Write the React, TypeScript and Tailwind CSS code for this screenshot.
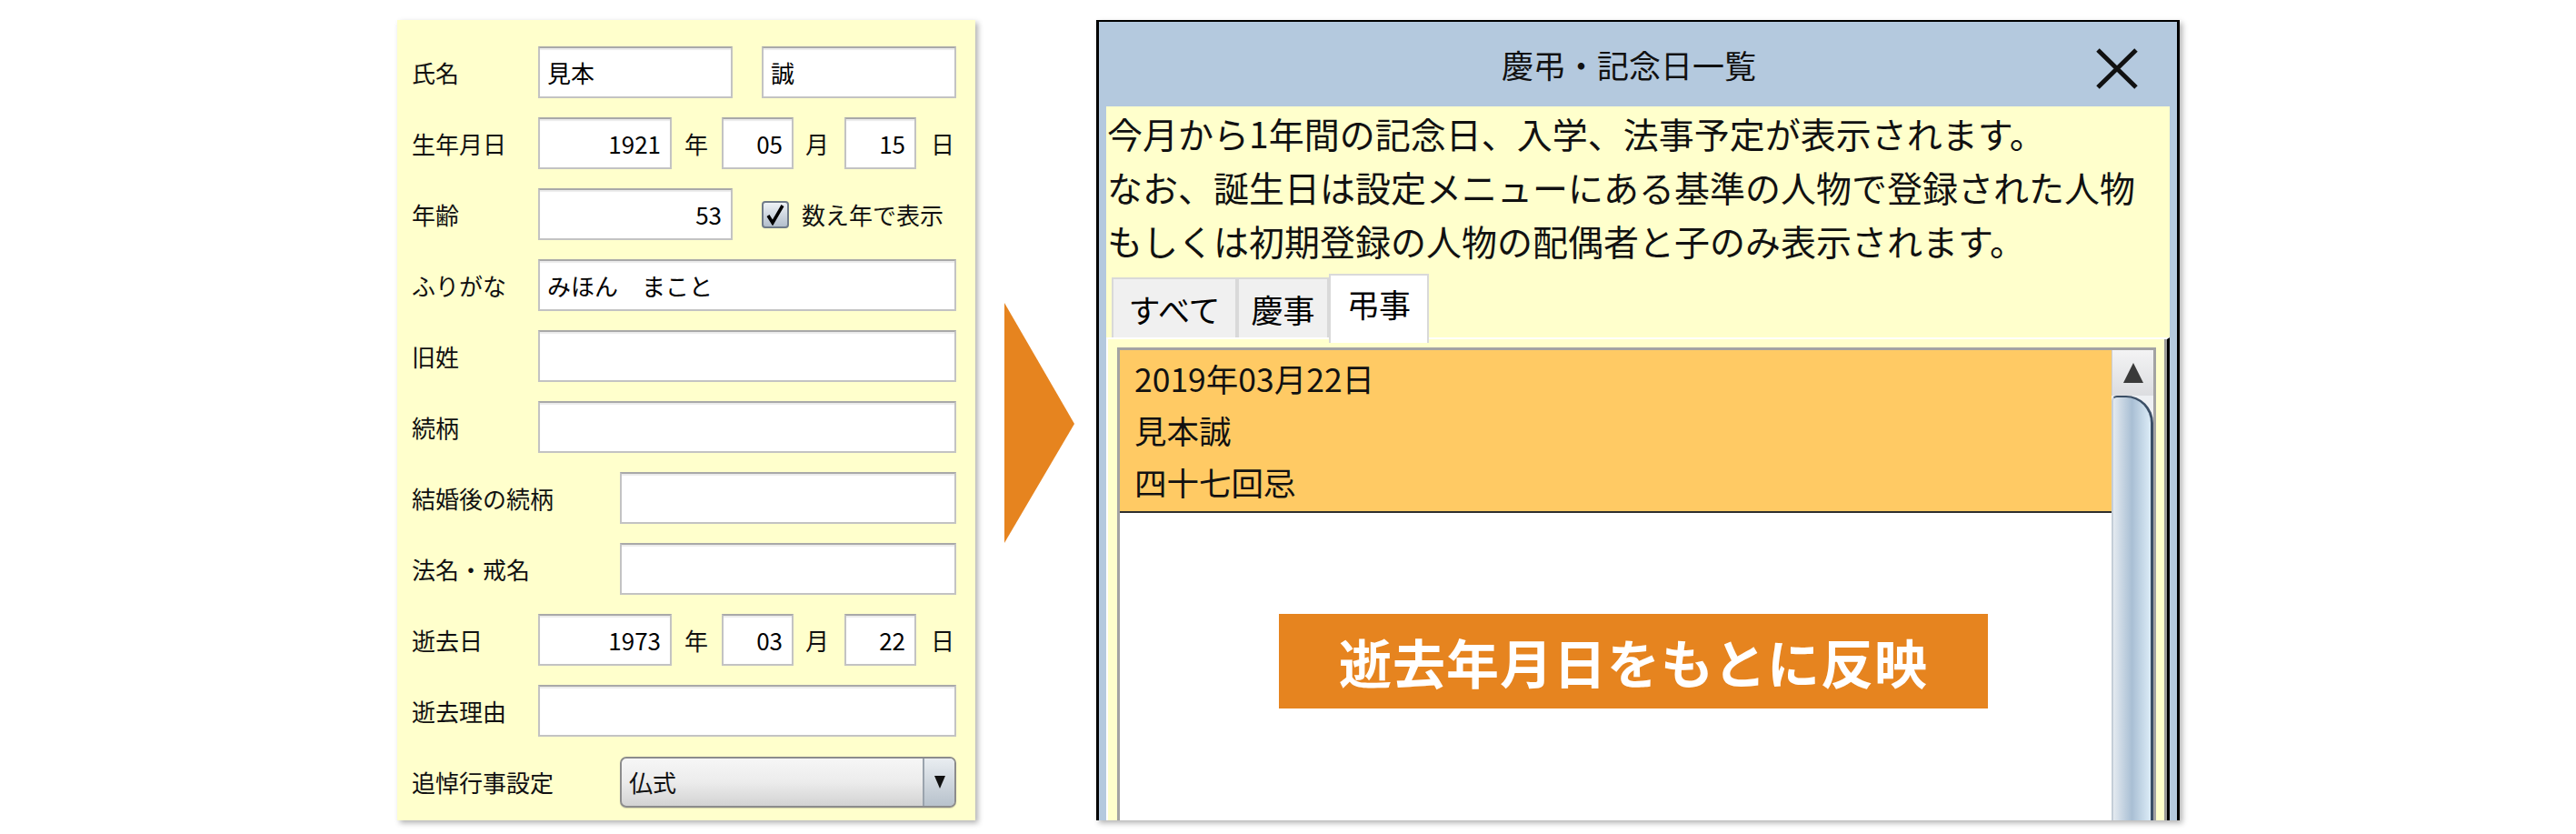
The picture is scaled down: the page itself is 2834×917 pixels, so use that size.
import React from "react";

const font = { fontFamily: '"Noto Sans CJK JP", "Noto Sans", sans-serif' };

function Box({ w, children, right }: { w: string; children?: React.ReactNode; right?: boolean }) {
  return (
    <div
      className={`${w} h-[57px] shrink-0 bg-white border-2 border-[#c3c3c3] border-t-[#a9a9a9] shadow-[inset_0_2px_1px_rgba(0,0,0,0.08)] flex items-center ${
        right ? "justify-end pr-[10px]" : "pl-[8px]"
      } text-[26px] leading-none text-black`}
    >
      {children}
    </div>
  );
}

function Label({ w, children }: { w: string; children: React.ReactNode }) {
  return <div className={`${w} shrink-0 text-[26px] leading-none text-[#111]`}>{children}</div>;
}

function Row({ children }: { children: React.ReactNode }) {
  return <div className="flex items-center h-[57px]">{children}</div>;
}

function Unit({ children, ml }: { children: React.ReactNode; ml: string }) {
  return <span className={`${ml} text-[26px] leading-none text-[#111] shrink-0`}>{children}</span>;
}

function LeftPanel() {
  return (
    <div className="w-[636px] h-[880px] shrink-0 bg-[#ffffcc] shadow-[3px_3px_6px_rgba(0,0,0,0.3)] pt-[29px] pl-[16px] flex flex-col gap-[21px]">
      <Row>
        <Label w="w-[139px]">氏名</Label>
        <Box w="w-[214px]">見本</Box>
        <div className="w-[32px] shrink-0" />
        <Box w="w-[214px]">誠</Box>
      </Row>
      <Row>
        <Label w="w-[139px]">生年月日</Label>
        <Box w="w-[147px]" right>1921</Box>
        <Unit ml="ml-[14px]">年</Unit>
        <div className="ml-[15px]">
          <Box w="w-[79px]" right>05</Box>
        </div>
        <Unit ml="ml-[13px]">月</Unit>
        <div className="ml-[17px]">
          <Box w="w-[79px]" right>15</Box>
        </div>
        <Unit ml="ml-[16px]">日</Unit>
      </Row>
      <Row>
        <Label w="w-[139px]">年齢</Label>
        <Box w="w-[214px]" right>53</Box>
        <div className="ml-[32px] w-[30px] h-[30px] rounded-[4px] border-2 border-[#6f7b89] bg-gradient-to-b from-[#eef2f6] to-[#b3bfcc] flex items-center justify-center shrink-0">
          <svg width="22" height="24" viewBox="0 0 22 24">
            <path d="M3 13 L8 21 L19 2" fill="none" stroke="#000" strokeWidth="3.5" strokeLinejoin="miter" />
          </svg>
        </div>
        <span className="ml-[14px] text-[26px] leading-none text-[#111] whitespace-nowrap">数え年で表示</span>
      </Row>
      <Row>
        <Label w="w-[139px]">ふりがな</Label>
        <Box w="w-[460px]">みほん　まこと</Box>
      </Row>
      <Row>
        <Label w="w-[139px]">旧姓</Label>
        <Box w="w-[460px]" />
      </Row>
      <Row>
        <Label w="w-[139px]">続柄</Label>
        <Box w="w-[460px]" />
      </Row>
      <Row>
        <Label w="w-[229px]">結婚後の続柄</Label>
        <Box w="w-[370px]" />
      </Row>
      <Row>
        <Label w="w-[229px]">法名・戒名</Label>
        <Box w="w-[370px]" />
      </Row>
      <Row>
        <Label w="w-[139px]">逝去日</Label>
        <Box w="w-[147px]" right>1973</Box>
        <Unit ml="ml-[14px]">年</Unit>
        <div className="ml-[15px]">
          <Box w="w-[79px]" right>03</Box>
        </div>
        <Unit ml="ml-[13px]">月</Unit>
        <div className="ml-[17px]">
          <Box w="w-[79px]" right>22</Box>
        </div>
        <Unit ml="ml-[16px]">日</Unit>
      </Row>
      <Row>
        <Label w="w-[139px]">逝去理由</Label>
        <Box w="w-[460px]" />
      </Row>
      <Row>
        <Label w="w-[229px]">追悼行事設定</Label>
        <div className="w-[370px] h-[56px] shrink-0 rounded-[7px] border-2 border-[#8c8c8c] bg-gradient-to-b from-[#f6f6f6] via-[#ececec] to-[#d3d3d3] flex overflow-hidden shadow-[0_1px_1px_rgba(0,0,0,0.15)]">
          <div className="flex-1 flex items-center pl-[8px] text-[26px] leading-none text-[#111]">仏式</div>
          <div className="w-[35px] border-l-2 border-[#9aa3ad] bg-gradient-to-b from-[#e9edf1] to-[#b8c2cc] flex items-center justify-center">
            <svg width="12" height="14" viewBox="0 0 12 14">
              <polygon points="0,0 12,0 6,14" fill="#111" />
            </svg>
          </div>
        </div>
      </Row>
    </div>
  );
}

function Arrow() {
  return (
    <div className="ml-[32px] mt-[311px] shrink-0">
      <svg width="77" height="264" viewBox="0 0 77 264">
        <polygon points="0,0 77,133 0,264" fill="#e6841f" />
      </svg>
    </div>
  );
}

function Tab({ children, active, w }: { children: React.ReactNode; active?: boolean; w: string }) {
  if (active) {
    return (
      <div
        className={`${w} h-[76px] -mb-[6px] relative z-10 bg-white border-2 border-b-0 border-[#d9d9d9] flex items-start justify-center pt-[9px] text-[35px] leading-[44px] text-black shrink-0`}
      >
        {children}
      </div>
    );
  }
  return (
    <div
      className={`${w} h-[66px] mt-[4px] bg-[#f0f0f0] border-2 border-b-0 border-[#d9d9d9] flex items-center justify-center text-[35px] leading-none text-black shrink-0`}
    >
      {children}
    </div>
  );
}

function Window() {
  return (
    <div className="ml-[24px] w-[1192px] h-[880px] shrink-0 border-t-2 border-x-[3px] border-black bg-[#b4c9de] flex flex-col shadow-[3px_3px_6px_rgba(0,0,0,0.3)]">
      <div className="h-[93px] relative flex items-center justify-center pr-[20px] shrink-0">
        <span className="text-[35px] leading-none text-[#111]">慶弔・記念日一覧</span>
        <div className="absolute right-[42px] top-[28px]">
          <svg width="48" height="47" viewBox="0 0 48 47">
            <path d="M3 3 L45 44 M45 3 L3 44" stroke="#111" strokeWidth="5" fill="none" />
          </svg>
        </div>
      </div>
      <div className="mx-[8px] flex-1 bg-[#ffffcc] flex flex-col min-h-0">
        <div className="pl-[1px] text-[39px] leading-[59px] text-[#111] whitespace-nowrap">
          <div>今月から1年間の記念日、入学、法事予定が表示されます。</div>
          <div>なお、誕生日は設定メニューにある基準の人物で登録された人物</div>
          <div>もしくは初期登録の人物の配偶者と子のみ表示されます。</div>
        </div>
        <div className="mt-[7px] flex items-start pl-[6px] shrink-0">
          <Tab w="w-[138px]">すべて</Tab>
          <Tab w="w-[101px]">慶事</Tab>
          <Tab w="w-[110px]" active>
            弔事
          </Tab>
        </div>
        <div className="flex-1 flex flex-col min-h-0 border-t-2 border-l-2 border-white border-r-[3px] border-r-black shadow-[inset_-3px_0_0_#9a9a9a] pt-[9px] pl-[10px] pr-[12px]">
          <div className="flex-1 flex bg-white border-[3px] border-b-0 border-[#a3a3a3] min-h-0">
            <div className="flex-1 flex flex-col">
              <div className="bg-[#ffca64] border-b-2 border-[#2e2e2e] pt-[2px] pb-[4px] pl-[16px] text-[35.5px] leading-[57px] text-[#111]">
                <div>2019年03月22日</div>
                <div>見本誠</div>
                <div>四十七回忌</div>
              </div>
            </div>
            <div className="w-[46px] flex flex-col shrink-0 bg-[#eef0f3]">
              <div className="h-[50px] bg-gradient-to-b from-[#f3f3f4] to-[#dcdde0] border-l border-[#c9ccd1] flex items-center justify-center">
                <svg width="22" height="22" viewBox="0 0 22 22">
                  <polygon points="11,0 22,22 0,22" fill="#3a3a3a" />
                </svg>
              </div>
              <div className="flex-1 rounded-tr-[30px] rounded-tl-[6px] border-t-2 border-r-[3px] border-[#3b4f66] border-l-2 border-l-[#c4ced8] bg-gradient-to-r from-[#e4eaf0] via-[#a9bfd4] to-[#dcecf7]" />
            </div>
          </div>
        </div>
      </div>
    </div>
  );
}

export default function App() {
  return (
    <div
      className="relative w-[2834px] h-[917px] bg-white overflow-hidden flex items-start pt-[22px] pl-[437px]"
      style={font}
    >
      <LeftPanel />
      <Arrow />
      <Window />
      <div className="absolute left-[1407px] top-[675px] w-[780px] h-[104px] bg-[#e6841f] flex items-center justify-center text-white font-bold text-[58px] leading-none tracking-[1px]">
        逝去年月日をもとに反映
      </div>
    </div>
  );
}
